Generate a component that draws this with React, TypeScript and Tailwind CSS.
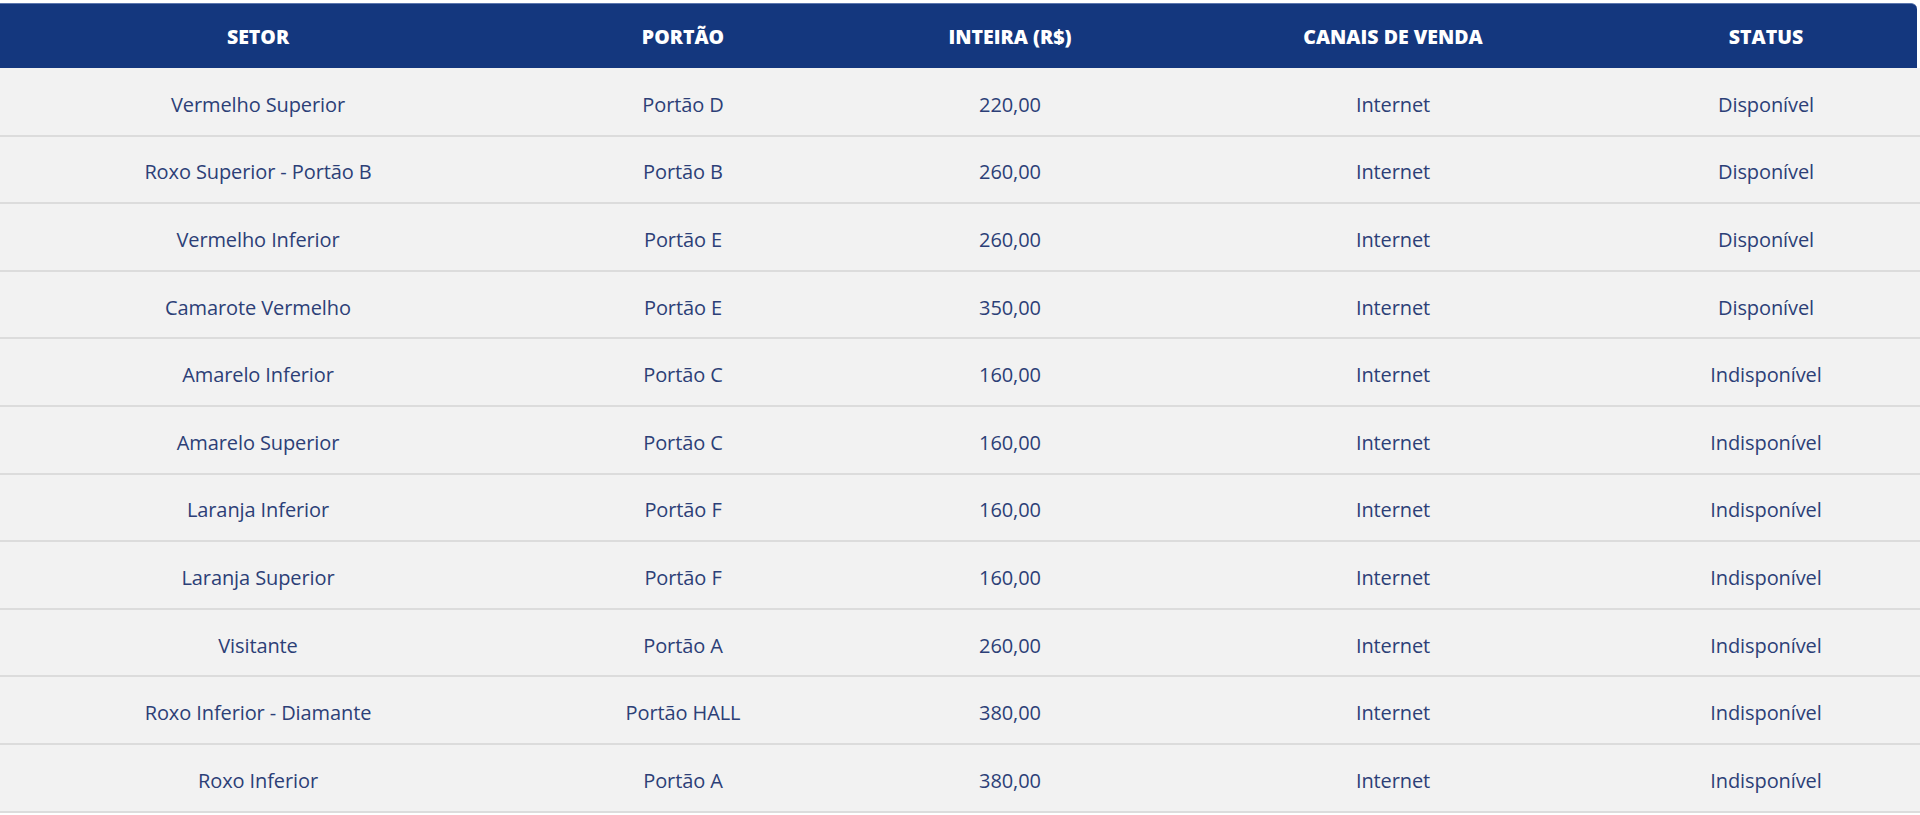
import React from 'react';

type Row = { setor: string; portao: string; inteira: string; canal: string; status: string };

const rows: Row[] = [
    { setor: 'Vermelho Superior', portao: 'Portão D', inteira: '220,00', canal: 'Internet', status: 'Disponível' },
    { setor: 'Roxo Superior - Portão B', portao: 'Portão B', inteira: '260,00', canal: 'Internet', status: 'Disponível' },
    { setor: 'Vermelho Inferior', portao: 'Portão E', inteira: '260,00', canal: 'Internet', status: 'Disponível' },
    { setor: 'Camarote Vermelho', portao: 'Portão E', inteira: '350,00', canal: 'Internet', status: 'Disponível' },
    { setor: 'Amarelo Inferior', portao: 'Portão C', inteira: '160,00', canal: 'Internet', status: 'Indisponível' },
    { setor: 'Amarelo Superior', portao: 'Portão C', inteira: '160,00', canal: 'Internet', status: 'Indisponível' },
    { setor: 'Laranja Inferior', portao: 'Portão F', inteira: '160,00', canal: 'Internet', status: 'Indisponível' },
    { setor: 'Laranja Superior', portao: 'Portão F', inteira: '160,00', canal: 'Internet', status: 'Indisponível' },
    { setor: 'Visitante', portao: 'Portão A', inteira: '260,00', canal: 'Internet', status: 'Indisponível' },
    { setor: 'Roxo Inferior - Diamante', portao: 'Portão HALL', inteira: '380,00', canal: 'Internet', status: 'Indisponível' },
    { setor: 'Roxo Inferior', portao: 'Portão A', inteira: '380,00', canal: 'Internet', status: 'Indisponível' },
];

const headers = ['SETOR', 'PORTÃO', 'INTEIRA (R$)', 'CANAIS DE VENDA', 'STATUS'];

// column widths measured off the reference
const cols = 'grid grid-cols-[516px_334px_320px_446px_300px]';

export default function App() {
    return (
        <div className="w-[1920px] h-[815px] bg-white overflow-hidden pt-[3px] font-['Open_Sans',sans-serif]">
            <div className="w-[1917px]">
                <div className={`${cols} h-[65px] items-center pt-[2px] bg-[#14377e] border-t border-[#5b76ae] rounded-tr-[6px] text-white font-extrabold text-[19.5px] tracking-[0px]`}>
                    {headers.map((h) => (
                        <div key={h} className="text-center">{h}</div>
                    ))}
                </div>
            </div>
            <div className="h-px bg-[#f2f2f2]" />
            {rows.map((r, i) => (
                <div key={i} className={`${cols} h-[67.6px] items-center pt-[6px] bg-[#f2f2f2] border-b-2 border-[#dcdcdc] text-[20px] tracking-[-0.1px] text-[#2c3f77] w-[1920px]`}>
                    <div className="text-center">{r.setor}</div>
                    <div className="text-center">{r.portao}</div>
                    <div className="text-center">{r.inteira}</div>
                    <div className="text-center">{r.canal}</div>
                    <div className="text-center">{r.status}</div>
                </div>
            ))}
        </div>
    );
}
